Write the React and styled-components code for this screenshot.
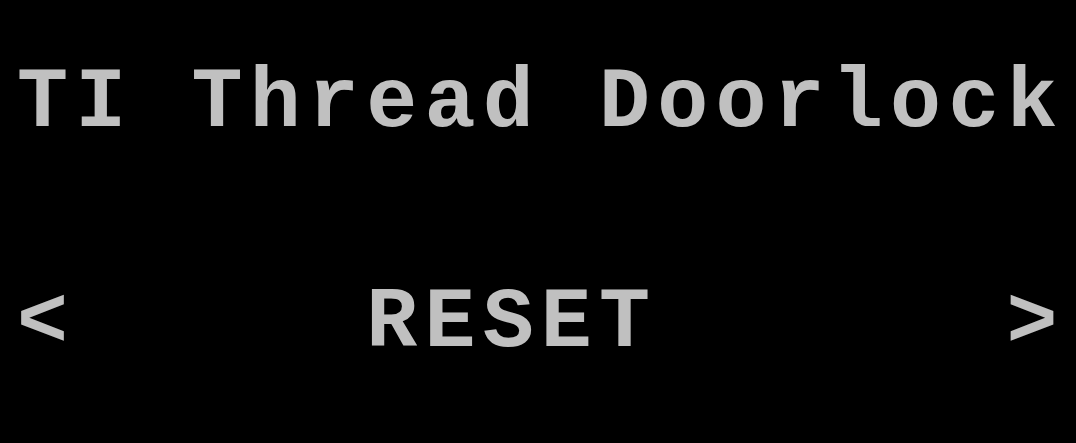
import React from "react";
import styled, { createGlobalStyle } from "styled-components";

const GlobalStyle = createGlobalStyle`
  html, body {
    margin: 0;
    background: #000;
  }
`;

// Courier-style grid: 18 columns of ~58px, lines 110px apart
const Screen = styled.div`
  width: 1076px;
  height: 443px;
  box-sizing: border-box;
  padding: 49px 0 0 17px;
  background: #000;
  color: #c0c0c0;
  font-family: "Courier New", "Nimbus Mono PS", FreeMono, "Liberation Mono", monospace;
  font-weight: bold;
  font-size: 85px;
  letter-spacing: 7.2px;
  line-height: 110px;
  overflow: hidden;
`;

const Line = styled.div`
  white-space: pre;
  height: 110px;
`;

const lines = ["TI Thread Doorlock", "", "<     RESET      >"];

export default function App() {
  return (
    <>
      <GlobalStyle />
      <Screen>
        {lines.map((text, i) => (
          <Line key={i}>{text}</Line>
        ))}
      </Screen>
    </>
  );
}
